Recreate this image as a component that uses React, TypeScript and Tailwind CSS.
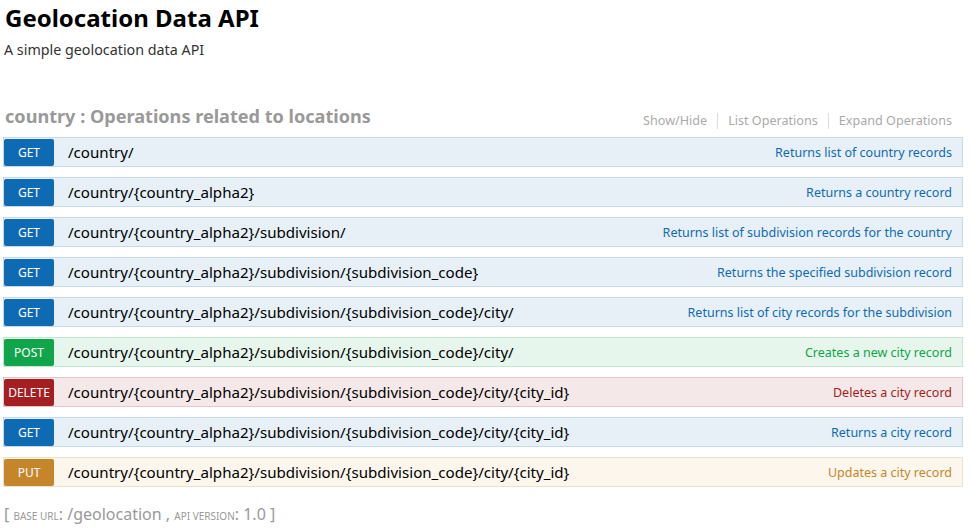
const OPS = [
  { method: "GET", path: "/country/", desc: "Returns list of country records" },
  { method: "GET", path: "/country/{country_alpha2}", desc: "Returns a country record" },
  {
    method: "GET",
    path: "/country/{country_alpha2}/subdivision/",
    desc: "Returns list of subdivision records for the country",
  },
  {
    method: "GET",
    path: "/country/{country_alpha2}/subdivision/{subdivision_code}",
    desc: "Returns the specified subdivision record",
  },
  {
    method: "GET",
    path: "/country/{country_alpha2}/subdivision/{subdivision_code}/city/",
    desc: "Returns list of city records for the subdivision",
  },
  {
    method: "POST",
    path: "/country/{country_alpha2}/subdivision/{subdivision_code}/city/",
    desc: "Creates a new city record",
  },
  {
    method: "DELETE",
    path: "/country/{country_alpha2}/subdivision/{subdivision_code}/city/{city_id}",
    desc: "Deletes a city record",
  },
  {
    method: "GET",
    path: "/country/{country_alpha2}/subdivision/{subdivision_code}/city/{city_id}",
    desc: "Returns a city record",
  },
  {
    method: "PUT",
    path: "/country/{country_alpha2}/subdivision/{subdivision_code}/city/{city_id}",
    desc: "Updates a city record",
  },
];

const STYLES: Record<string, { row: string; badge: string; desc: string }> = {
  GET: {
    row: "bg-[#e7f0f7] border-[#c3d9ec]",
    badge: "bg-[#0f6ab4]",
    desc: "text-[#0f6ab4]",
  },
  POST: {
    row: "bg-[#e7f6ec] border-[#c3e8d1]",
    badge: "bg-[#10a54a]",
    desc: "text-[#10a54a]",
  },
  DELETE: {
    row: "bg-[#f5e8e8] border-[#e8c6c7]",
    badge: "bg-[#a41e22]",
    desc: "text-[#a41e22]",
  },
  PUT: {
    row: "bg-[#fcf6ed] border-[#f0e0ca]",
    badge: "bg-[#c5862b]",
    desc: "text-[#c5862b]",
  },
};

function Operation({ method, path, desc }: { method: string; path: string; desc: string }) {
  const s = STYLES[method];
  return (
    <li className={`flex h-[30px] items-center border ${s.row}`}>
      <span
        className={`flex h-[27px] w-[50px] shrink-0 items-center justify-center rounded-[2px] pt-[2px] text-[12px] text-white ${s.badge}`}
      >
        {method}
      </span>
      <span className="ml-[14px] text-[15.1px] text-black">{path}</span>
      <span className={`ml-auto pr-[10px] pt-[2px] text-[12.5px] ${s.desc}`}>{desc}</span>
    </li>
  );
}

export default function App() {
  return (
    <div className="min-h-[530px] bg-white px-[3px] font-['Noto_Sans','Open_Sans',sans-serif]">
      <h1 className="pl-[2px] pt-[1px] text-[24px] leading-[34px] font-bold text-black">
        Geolocation Data API
      </h1>
      <p className="mt-[5px] pl-px text-[14.3px] leading-[20px] text-[#333]">
        A simple geolocation data API
      </p>

      <div className="mt-[43px] flex items-end justify-between pr-[15px]">
        <h2 className="pl-[2px] text-[18.1px] leading-[26px] font-bold text-[#999]">
          country : Operations related to locations
        </h2>
        <ul className="flex text-[12.6px] leading-[16px] text-[#aaa]">
          <li className="pr-[10px]">Show/Hide</li>
          <li className="border-l border-[#ddd] px-[10px]">List Operations</li>
          <li className="border-l border-[#ddd] pl-[10px]">Expand Operations</li>
        </ul>
      </div>

      <ul className="mt-[8px] flex flex-col gap-[10px] pr-[4px]">
        {OPS.map((op, i) => (
          <Operation key={i} {...op} />
        ))}
      </ul>

      <p className="mt-[15px] pl-[1px] text-[16px] leading-[24px] text-[#999]">
        [ <span className="text-[10px] uppercase">base url</span>: /geolocation ,{" "}
        <span className="text-[10px] uppercase">api version</span>: 1.0 ]
      </p>
    </div>
  );
}
